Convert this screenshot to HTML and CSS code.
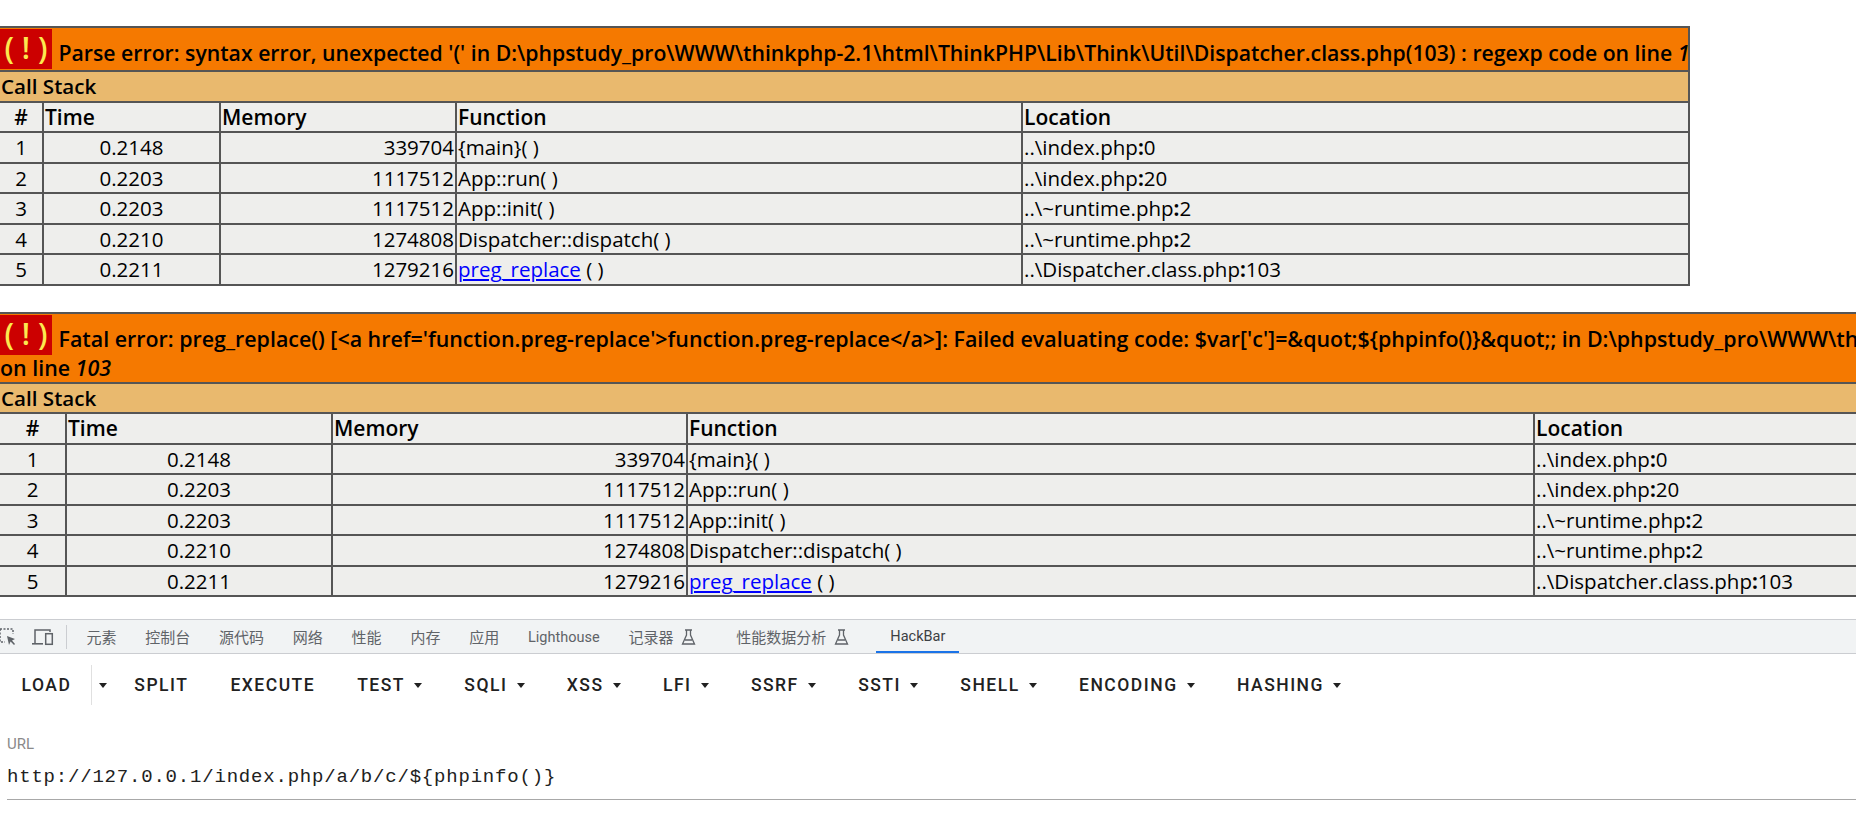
FILE: index.html
```html
<!DOCTYPE html>
<html lang="zh">
<head>
<meta charset="utf-8">
<title>HackBar</title>
<link rel="stylesheet" href="styles.css">
</head>
<body>
<main class="page">
  <table class="xd xd-a">
    <colgroup><col class="a1"><col class="a2"><col class="a3"><col class="a4"><col></colgroup>
    <tr class="msg"><th colspan="5"><span class="bang">( ! )</span> Parse error: syntax error, unexpected '(' in D:\phpstudy_pro\WWW\thinkphp-2.1\html\ThinkPHP\Lib\Think\Util\Dispatcher.class.php(103) : regexp code on line <i>1</i></th></tr>
    <tr class="cs"><th colspan="5">Call Stack</th></tr>
    <tr class="hd"><th class="c">#</th><th>Time</th><th>Memory</th><th>Function</th><th>Location</th></tr>
    <tr><td class="c">1</td><td class="c">0.2148</td><td class="r">339704</td><td>{main}( )</td><td>..\index.php<b>:</b>0</td></tr>
    <tr><td class="c">2</td><td class="c">0.2203</td><td class="r">1117512</td><td>App::run( )</td><td>..\index.php<b>:</b>20</td></tr>
    <tr><td class="c">3</td><td class="c">0.2203</td><td class="r">1117512</td><td>App::init( )</td><td>..\~runtime.php<b>:</b>2</td></tr>
    <tr><td class="c">4</td><td class="c">0.2210</td><td class="r">1274808</td><td>Dispatcher::dispatch( )</td><td>..\~runtime.php<b>:</b>2</td></tr>
    <tr><td class="c">5</td><td class="c">0.2211</td><td class="r">1279216</td><td><a href="#">preg_replace</a> ( )</td><td>..\Dispatcher.class.php<b>:</b>103</td></tr>
  </table>
  <table class="xd xd-b">
    <colgroup><col class="b1"><col class="b2"><col class="b3"><col class="b4"><col class="b5"></colgroup>
    <tr class="msg"><th colspan="5"><span class="bang">( ! )</span> Fatal error: preg_replace() [&lt;a href='function.preg-replace'&gt;function.preg-replace&lt;/a&gt;]: Failed evaluating code: $var['c']=&amp;quot;${phpinfo()}&amp;quot;; in D:\phpstudy_pro\WWW\thinkphp-2.1\html\ThinkPHP\Lib\Think\Util\Dispatcher.class.php(103) : regexp code<br>on line <i>103</i></th></tr>
    <tr class="cs"><th colspan="5">Call Stack</th></tr>
    <tr class="hd"><th class="c">#</th><th>Time</th><th>Memory</th><th>Function</th><th>Location</th></tr>
    <tr><td class="c">1</td><td class="c">0.2148</td><td class="r">339704</td><td>{main}( )</td><td>..\index.php<b>:</b>0</td></tr>
    <tr><td class="c">2</td><td class="c">0.2203</td><td class="r">1117512</td><td>App::run( )</td><td>..\index.php<b>:</b>20</td></tr>
    <tr><td class="c">3</td><td class="c">0.2203</td><td class="r">1117512</td><td>App::init( )</td><td>..\~runtime.php<b>:</b>2</td></tr>
    <tr><td class="c">4</td><td class="c">0.2210</td><td class="r">1274808</td><td>Dispatcher::dispatch( )</td><td>..\~runtime.php<b>:</b>2</td></tr>
    <tr><td class="c">5</td><td class="c">0.2211</td><td class="r">1279216</td><td><a href="#">preg_replace</a> ( )</td><td>..\Dispatcher.class.php<b>:</b>103</td></tr>
  </table>
</main>
<section class="devtools">
  <nav class="tabs">
    <svg class="ic-inspect" width="18" height="18" viewBox="0 0 18 18"><path d="M1 1h13v5M1 1v13h5" fill="none" stroke="#5f6368" stroke-width="1.5" stroke-dasharray="2 1.5"/><path d="M8 8l8 3-3 1.6L16 16l-1 1-3.4-3.4L10 17z" fill="#5f6368"/></svg>
    <svg class="ic-device" width="22" height="18" viewBox="0 0 22 18"><path d="M3 15V2h15v2" fill="none" stroke="#5f6368" stroke-width="1.5"/><path d="M0 15h11v1.6H0z" fill="#5f6368"/><rect x="13.7" y="5.7" width="6.6" height="10.6" fill="none" stroke="#5f6368" stroke-width="1.5"/></svg>
    <span class="sep"></span>
    <span class="tab">元素</span><span class="tab">控制台</span><span class="tab">源代码</span><span class="tab">网络</span><span class="tab">性能</span><span class="tab">内存</span><span class="tab">应用</span><span class="tab lat">Lighthouse</span>
    <span class="tab exp">记录器<svg class="flask" width="15" height="16" viewBox="0 0 15 16"><path d="M4 1h7M5.5 1v5L1.5 15h12L9.5 6V1M4 11h7" fill="none" stroke="#5f6368" stroke-width="1.3"/></svg></span>
    <span class="tab exp">性能数据分析<svg class="flask" width="15" height="16" viewBox="0 0 15 16"><path d="M4 1h7M5.5 1v5L1.5 15h12L9.5 6V1M4 11h7" fill="none" stroke="#5f6368" stroke-width="1.3"/></svg></span>
    <span class="tab lat on">HackBar</span>
  </nav>
  <div class="bar">
    <button class="btn load">LOAD</button>
    <button class="btn more"><span class="caret"></span></button>
    <button class="btn">SPLIT</button>
    <button class="btn">EXECUTE</button>
    <button class="btn">TEST<span class="caret"></span></button>
    <button class="btn">SQLI<span class="caret"></span></button>
    <button class="btn">XSS<span class="caret"></span></button>
    <button class="btn">LFI<span class="caret"></span></button>
    <button class="btn">SSRF<span class="caret"></span></button>
    <button class="btn">SSTI<span class="caret"></span></button>
    <button class="btn">SHELL<span class="caret"></span></button>
    <button class="btn">ENCODING<span class="caret"></span></button>
    <button class="btn">HASHING<span class="caret"></span></button>
  </div>
  <div class="field">
    <label class="lbl">URL</label>
    <div class="url">http://127.0.0.1/index.php/a/b/c/${phpinfo()}</div>
  </div>
</section>
```
FILE: styles.css
```css
* { box-sizing: border-box; }
html, body { margin: 0; height: 825px; overflow: hidden; background: #fff; }
.page { height: 619px; padding-top: 26px; overflow: hidden; }
.xd {
  border-collapse: collapse;
  table-layout: fixed;
  margin-left: -2px;
  font-family: "Open Sans", sans-serif;
  font-size: 20.5px;
  color: #000;
  border: 2px solid #555;
}
.xd-a { width: 1692px; margin-bottom: 26px; }
.xd-b { width: 1900px; }
.xd th, .xd td { border: 2px solid #555; padding: 0 1px; text-align: left; white-space: nowrap; overflow: hidden; background: #eeeeec; height: 30.5px; font-weight: 400; line-height: 26px; }
.xd th { font-weight: 600; font-size: 21px; }
.xd .c { text-align: center; }
.xd .r { text-align: right; }
.xd .msg th { background: #f57900; font-size: 21.23px; height: 44px; padding: 1px 0 0 0; vertical-align: top; }
.xd-b .msg th { font-size: 21.4px; height: 70px; line-height: 25px; }
.xd .cs th { background: #e9b96e; font-size: 20.6px; padding-left: 1px; }
.xd b { font-weight: 700; }
.xd a { color: #00f; }
.xd .bang { display: inline-block; margin-right: 1px; background: #c00; color: #fce94f; font-size: 30px; font-weight: 600; width: 52px; height: 40px; line-height: 38px; text-align: center; vertical-align: 2px; white-space: nowrap; }
.a1 { width: 44px; } .a2 { width: 177px; } .a3 { width: 236px; } .a4 { width: 566px; }
.b1 { width: 67px; } .b2 { width: 266px; } .b3 { width: 355px; } .b4 { width: 847px; } .b5 { width: 366px; }

.devtools { height: 206px; font-family: Roboto, sans-serif; }
.tabs { display: flex; align-items: center; height: 35px; background: #f1f3f4; border-top: 1px solid #cbcdd1; border-bottom: 1px solid #cbcdd1; color: #5f6368; font-size: 15px; font-family: Roboto, "Noto Sans CJK SC", sans-serif; }
.ic-inspect { margin-left: -1px; flex: none; }
.ic-device { margin-left: 15px; flex: none; }
.sep { width: 1px; height: 24px; background: #cbcdd1; margin: 0 5px 0 12px; flex: none; }
.tab { display: flex; align-items: center; height: 33px; padding: 0 14.4px; white-space: nowrap; }
.tab.lat { font-size: 14.5px; padding-top: 2px; }
.tab.exp { padding-right: 25.5px; }
.tab.on { color: #3c4043; border-bottom: 2px solid #1a73e8; margin-left: 1.5px; padding: 2px 14px 0; }
.flask { margin-left: 8px; }
.bar { display: flex; align-items: center; height: 62px; padding-left: 1px; }
.btn { display: flex; align-items: center; height: 40px; padding: 0 21px; border: 0; background: none; color: #212121; font-family: Roboto, sans-serif; font-weight: 500; font-size: 17.5px; letter-spacing: 1.5px; white-space: nowrap; }
.btn.load { padding-left: 20.5px; padding-right: 20px; border-right: 1px solid #e0e0e0; }
.btn.more { padding: 0 6.5px; }
.caret { display: block; width: 0; height: 0; margin-left: 9.4px; border-left: 4.5px solid transparent; border-right: 4.5px solid transparent; border-top: 5px solid #212121; }
.more .caret { margin-left: 0; }
.field { margin: 0 0 0 7px; padding-top: 18px; }
.lbl { display: block; color: #8a8a8a; font-size: 15px; line-height: 20px; }
.url { margin-top: 11px; height: 35px; border-bottom: 1px solid #a8a8a8; color: #212121; font-family: "Liberation Mono", monospace; font-size: 19px; letter-spacing: .8px; line-height: 24px; white-space: nowrap; }
```
